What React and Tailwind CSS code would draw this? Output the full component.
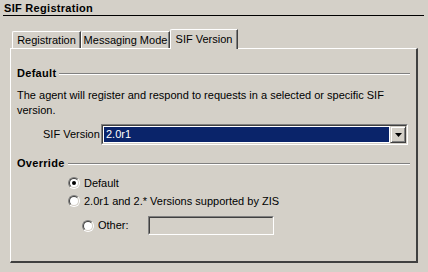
import React from "react";

function Radio({ checked }) {
  return (
    <div className="w-[12px] h-[12px] rounded-full border border-t-[#808080] border-l-[#808080] border-r-white border-b-white flex">
      <div className="flex-1 rounded-full border border-t-[#404040] border-l-[#404040] border-r-[#d4d0c8] border-b-[#d4d0c8] bg-white flex items-center justify-center">
        {checked && <div className="w-[4px] h-[4px] rounded-full bg-black" />}
      </div>
    </div>
  );
}

function Section({ title }) {
  return (
    <div className="flex items-center h-[13px]">
      <span className="font-bold tracking-[0.3px]">{title}</span>
      <div className="flex-1 ml-[3px] border-t border-t-[#808080] border-b border-b-white" />
    </div>
  );
}

export default function App() {
  return (
    <div
      className="w-[428px] h-[272px] bg-[#d4d0c8] text-black text-[11px] leading-[13px] overflow-hidden"
      style={{ fontFamily: '"Liberation Sans", Arial, sans-serif' }}
    >
      <div className="ml-[3px] w-[421px] h-[16px] border-b border-black pt-[2px] pl-[1px]">
        <span className="font-bold tracking-[0.3px]">SIF Registration</span>
      </div>

      <div className="ml-[10px] mt-[13px] w-[408px]">
        <div className="flex items-end pl-[2px] h-[19px]">
          <div className="w-[69px] h-[17px] border-l border-t border-white border-r border-r-[#404040] shadow-[inset_-1px_0_0_#808080] rounded-tl-[2px] flex items-center justify-center pt-[1px]">
            Registration
          </div>
          <div className="w-[89px] h-[17px] border-l border-t border-white border-r border-r-[#404040] shadow-[inset_-1px_0_0_#808080] rounded-tl-[2px] flex items-center justify-center pt-[1px]">
            Messaging Mode
          </div>
          <div className="relative z-10 w-[68px] h-[20px] -mb-px bg-[#d4d0c8] border-l border-t border-white border-r border-r-[#404040] shadow-[inset_-1px_0_0_#808080] rounded-tl-[2px] flex items-start justify-center pt-[3px]">
            SIF Version
          </div>
        </div>

        <div className="h-[215px] border-l border-t border-white border-r-2 border-b-2 border-r-[#404040] border-b-[#404040] pt-[18px] pl-[6px] pr-[6px]">
          <Section title="Default" />
          <div className="mt-[8px] leading-[15px]">
            <div>The agent will register and respond to requests in a selected or specific SIF</div>
            <div>version.</div>
          </div>
          <div className="mt-[6px] flex items-center">
            <span className="ml-[26px] w-[58px]">SIF Version</span>
            <div className="w-[307px] h-[21px] border border-t-[#808080] border-l-[#808080] border-r-white border-b-white flex">
              <div className="flex-1 flex border border-t-[#404040] border-l-[#404040] border-r-[#d4d0c8] border-b-[#d4d0c8] bg-white">
                <div className="flex-1 m-[1px] mr-0 bg-[#0a246a] text-white pl-[2px] flex items-center">
                  2.0r1
                </div>
                <div className="w-[16px] ml-px bg-[#d4d0c8] border border-t-[#d4d0c8] border-l-[#d4d0c8] border-r-[#404040] border-b-[#404040] shadow-[inset_1px_1px_0_#ffffff,inset_-1px_-1px_0_#808080] flex items-center justify-center">
                  <svg width="7" height="4" viewBox="0 0 7 4">
                    <path d="M0 0H7L3.5 4Z" fill="#000" />
                  </svg>
                </div>
              </div>
            </div>
          </div>

          <div className="mt-[12px]">
            <Section title="Override" />
          </div>
          <div className="mt-[6px] ml-[51px] flex items-center gap-[4px] h-[14px]">
            <Radio checked />
            <span>Default</span>
          </div>
          <div className="mt-[4px] ml-[51px] flex items-center gap-[4px] h-[14px]">
            <Radio />
            <span>2.0r1 and 2.* Versions supported by ZIS</span>
          </div>
          <div className="mt-[8px] ml-[65px] flex items-center h-[19px]">
            <Radio />
            <span className="ml-[4px] w-[50px]">Other:</span>
            <div className="w-[126px] h-[19px] border border-t-[#808080] border-l-[#808080] border-r-white border-b-white">
              <div className="w-full h-full border border-t-[#404040] border-l-[#404040] border-r-[#d4d0c8] border-b-[#d4d0c8]" />
            </div>
          </div>
        </div>
      </div>
    </div>
  );
}
